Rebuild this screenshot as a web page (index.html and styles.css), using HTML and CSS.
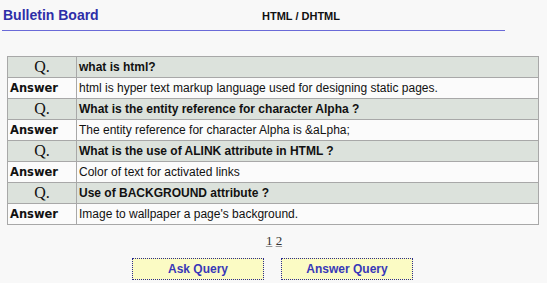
FILE: index.html
```html
<!DOCTYPE html>
<html>
<head>
<meta charset="utf-8">
<link rel="stylesheet" href="styles.css">
</head>
<body>
<div class="header">
  <div class="brand">Bulletin Board</div>
  <div class="section">HTML / DHTML</div>
</div>
<div class="rule"></div>
<table class="qa">
  <tr class="q"><td class="label">Q.</td><td>what is html?</td></tr>
  <tr class="a"><td class="label">Answer</td><td>html is hyper text markup language used for designing static pages.</td></tr>
  <tr class="q"><td class="label">Q.</td><td>What is the entity reference for character Alpha ?</td></tr>
  <tr class="a"><td class="label">Answer</td><td>The entity reference for character Alpha is &amp;aLpha;</td></tr>
  <tr class="q"><td class="label">Q.</td><td>What is the use of ALINK attribute in HTML ?</td></tr>
  <tr class="a"><td class="label">Answer</td><td>Color of text for activated links</td></tr>
  <tr class="q"><td class="label">Q.</td><td>Use of BACKGROUND attribute ?</td></tr>
  <tr class="a"><td class="label">Answer</td><td>Image to wallpaper a page's background.</td></tr>
</table>
<div class="pager"><a href="#">1</a> <a href="#">2</a></div>
<div class="buttons">
  <button class="btn">Ask Query</button>
  <button class="btn">Answer Query</button>
</div>
</body>
</html>
```
FILE: styles.css
```css
html, body {
  margin: 0;
  padding: 0;
  background: #f8f8f8;
  font-family: "Liberation Sans", Arial, sans-serif;
}
.header {
  display: flex;
  align-items: flex-end;
  padding: 7px 0 0 3px;
  height: 16px;
}
.brand {
  width: 259px;
  font-size: 14px;
  font-weight: bold;
  color: #2e2ea8;
}
.section {
  font-size: 11px;
  font-weight: bold;
  color: #111;
  padding-bottom: 1px;
}
.rule {
  margin: 7px 0 0 2px;
  width: 503px;
  height: 1px;
  background: #6a6ad8;
}
.qa {
  margin: 25px 0 0 7px;
  width: 532px;
  border-collapse: collapse;
  border: 1px solid #a8a8a8;
  font-size: 12px;
  color: #111;
}
.qa td {
  border: 1px solid #a8a8a8;
  height: 21px;
  padding: 0 2px;
  box-sizing: border-box;
}
.qa td.label {
  width: 69px;
  text-align: center;
}
.q {
  background: #dce2dc;
  font-weight: bold;
}
.q td.label {
  font-family: "Liberation Serif", "Times New Roman", serif;
  font-weight: normal;
  font-size: 16px;
  line-height: 16px;
}
.a {
  background: #fbfbfb;
}
.a td.label {
  font-family: "DejaVu Sans", Verdana, sans-serif;
  font-weight: bold;
  font-size: 11.5px;
  text-align: left;
}
.pager {
  margin-top: 8px;
  text-align: center;
  font-family: "Liberation Serif", "Times New Roman", serif;
  font-size: 13px;
  padding-left: 1px;
}
.pager a {
  color: #333;
  text-decoration-color: #999;
}
.buttons {
  display: flex;
  justify-content: center;
  gap: 17px;
  margin-top: 9px;
  padding-right: 2px;
}
.btn {
  width: 132px;
  height: 22px;
  margin: 0;
  padding: 0;
  background: #fbfbc4;
  border: 1px dotted #2a2a90;
  font-family: "Liberation Sans", Arial, sans-serif;
  font-weight: bold;
  font-size: 12px;
  color: #3838b8;
}
```
